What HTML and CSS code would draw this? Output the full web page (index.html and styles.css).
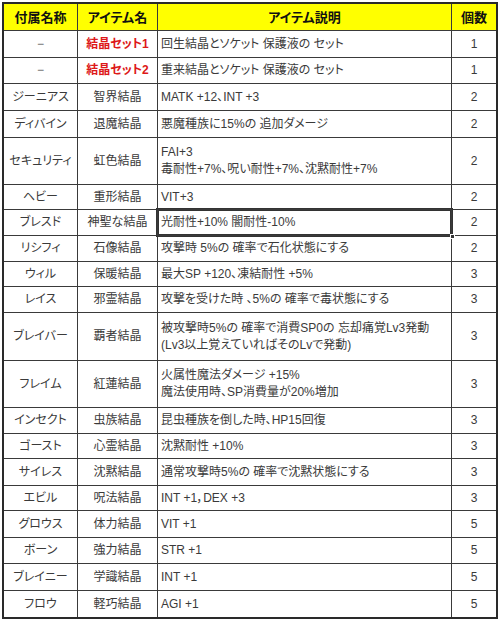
FILE: index.html
```html
<!DOCTYPE html>
<html lang="ja">
<head>
<meta charset="utf-8">
<link rel="stylesheet" href="styles.css">
</head>
<body>
<table class="items">
  <colgroup>
    <col class="c-name">
    <col class="c-item">
    <col class="c-desc">
    <col class="c-num">
  </colgroup>
  <thead>
    <tr class="head">
      <th>付属名称</th>
      <th>アイテム名</th>
      <th>アイテム説明</th>
      <th>個数</th>
    </tr>
  </thead>
  <tbody>
    <tr class="r tall1"><td class="ctr dash">−</td><td class="ctr red">結晶セット1</td><td class="desc">回生結晶とソケット 保護液の セット</td><td class="ctr">1</td></tr>
    <tr class="r"><td class="ctr dash">−</td><td class="ctr red">結晶セット2</td><td class="desc">重来結晶とソケット 保護液の セット</td><td class="ctr">1</td></tr>
    <tr class="r tall1"><td class="ctr">ジーニアス</td><td class="ctr">智界結晶</td><td class="desc">MATK +12、INT +3</td><td class="ctr">2</td></tr>
    <tr class="r tall1"><td class="ctr">ディバイン</td><td class="ctr">退魔結晶</td><td class="desc">悪魔種族に15%の 追加ダメージ</td><td class="ctr">2</td></tr>
    <tr class="r2"><td class="ctr">セキュリティ</td><td class="ctr">虹色結晶</td><td class="desc">FAI+3<br>毒耐性+7%、呪い耐性+7%、沈黙耐性+7%</td><td class="ctr">2</td></tr>
    <tr class="r short"><td class="ctr">ヘビー</td><td class="ctr">重形結晶</td><td class="desc">VIT+3</td><td class="ctr">2</td></tr>
    <tr class="r"><td class="ctr">ブレスド</td><td class="ctr">神聖な結晶</td><td class="desc active">光耐性+10% 闇耐性-10%<span class="sel"></span><span class="handle"></span></td><td class="ctr">2</td></tr>
    <tr class="r"><td class="ctr">リシフィ</td><td class="ctr">石像結晶</td><td class="desc">攻撃時 5%の 確率で石化状態にする</td><td class="ctr">2</td></tr>
    <tr class="r short"><td class="ctr">ウィル</td><td class="ctr">保暖結晶</td><td class="desc">最大SP +120、凍結耐性 +5%</td><td class="ctr">3</td></tr>
    <tr class="r"><td class="ctr">レイス</td><td class="ctr">邪霊結晶</td><td class="desc">攻撃を受けた時 、5%の 確率で毒状態にする</td><td class="ctr">3</td></tr>
    <tr class="r2 tall2"><td class="ctr">ブレイバー</td><td class="ctr">覇者結晶</td><td class="desc">被攻撃時5%の 確率で消費SP0の 忘却痛覚Lv3発動<br>(Lv3以上覚えていればそのLvで発動)</td><td class="ctr">3</td></tr>
    <tr class="r2"><td class="ctr">フレイム</td><td class="ctr">紅蓮結晶</td><td class="desc">火属性魔法ダメージ +15%<br>魔法使用時、SP消費量が20%増加</td><td class="ctr">3</td></tr>
    <tr class="r"><td class="ctr">インセクト</td><td class="ctr">虫族結晶</td><td class="desc">昆虫種族を倒した時、HP15回復</td><td class="ctr">3</td></tr>
    <tr class="r short"><td class="ctr">ゴースト</td><td class="ctr">心霊結晶</td><td class="desc">沈黙耐性 +10%</td><td class="ctr">3</td></tr>
    <tr class="r tall1"><td class="ctr">サイレス</td><td class="ctr">沈黙結晶</td><td class="desc">通常攻撃時5%の 確率で沈黙状態にする</td><td class="ctr">3</td></tr>
    <tr class="r short"><td class="ctr">エビル</td><td class="ctr">呪法結晶</td><td class="desc">INT +1，DEX +3</td><td class="ctr">3</td></tr>
    <tr class="r tall1"><td class="ctr">グロウス</td><td class="ctr">体力結晶</td><td class="desc">VIT +1</td><td class="ctr">5</td></tr>
    <tr class="r"><td class="ctr">ボーン</td><td class="ctr">強力結晶</td><td class="desc">STR +1</td><td class="ctr">5</td></tr>
    <tr class="r tall1"><td class="ctr">ブレイニー</td><td class="ctr">学識結晶</td><td class="desc">INT +1</td><td class="ctr">5</td></tr>
    <tr class="r last"><td class="ctr">フロウ</td><td class="ctr">軽巧結晶</td><td class="desc">AGI +1</td><td class="ctr">5</td></tr>
  </tbody>
</table>
</body>
</html>
```

FILE: styles.css
```css
html, body {
  margin: 0;
  padding: 0;
  background: #ffffff;
}

body {
  font-family: "Liberation Sans", "Noto Sans CJK JP", sans-serif;
  font-size: 12px;
  color: #3a3a3a;
  font-feature-settings: "palt";
}

.items {
  margin: 2px 0 0 2px;
  width: 496px;
  table-layout: fixed;
  border-collapse: separate;
  border-spacing: 0;
  border: 2px solid #2a2a2a;
}

.items *,
.items {
  box-sizing: border-box;
}

.c-name { width: 74px; }
.c-item { width: 80px; }
.c-desc { width: 294px; }
.c-num  { width: 44px; }

.items th,
.items td {
  padding: 0 3px;
  border-right: 1px solid #3a3a3a;
  border-bottom: 1px solid #3a3a3a;
  vertical-align: middle;
  white-space: nowrap;
  overflow: visible;
  line-height: 17px;
}

.items th:last-child,
.items td:last-child {
  border-right: none;
}

.items tr.last td {
  border-bottom: none;
}

.head {
  height: 27px;
  background: #ffff00;
}

.head th {
  font-weight: bold;
  color: #111111;
  text-align: center;
  font-size: 13px;
}

.r { height: 26px; }
.r.tall1 { height: 27px; }
.r.short { height: 25px; }
.r2 { height: 47px; }
.r2.tall2 { height: 48px; }

.ctr { text-align: center; }
.desc { text-align: left; }

.dash { color: #666666; }

.red {
  color: #dd1818;
  font-weight: bold;
}

.active {
  position: relative;
}

.sel {
  position: absolute;
  left: -2px;
  top: -2px;
  right: -2px;
  bottom: -2px;
  border: 3px double #333333;
  pointer-events: none;
}

.handle {
  position: absolute;
  right: -4px;
  bottom: -4px;
  width: 5px;
  height: 5px;
  background: #333333;
  border: 1px solid #ffffff;
}
```
